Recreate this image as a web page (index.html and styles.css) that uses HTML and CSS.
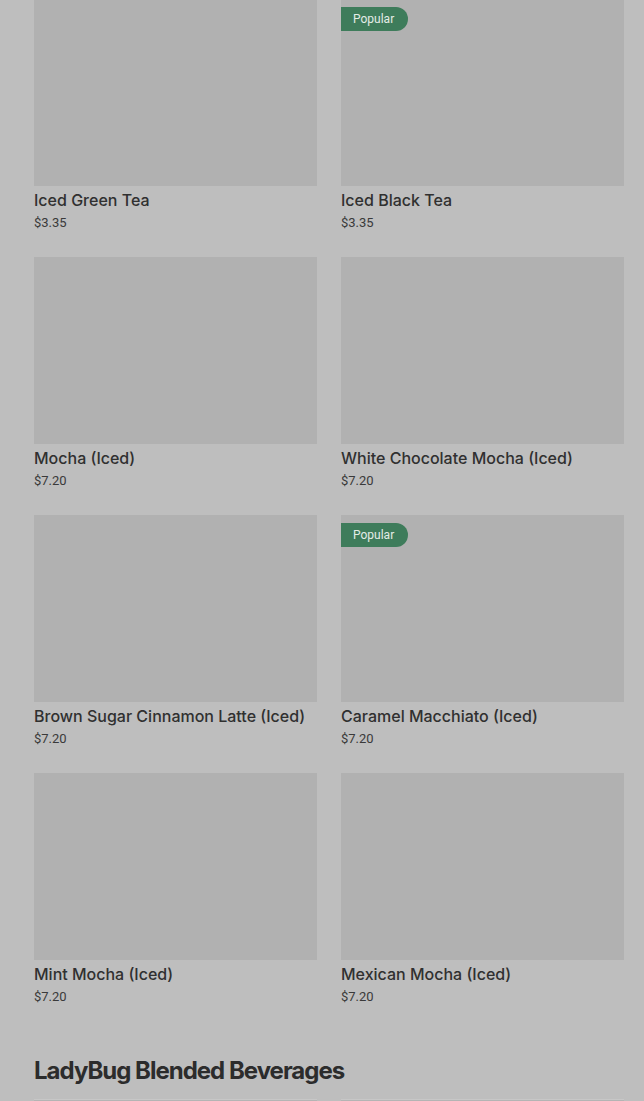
FILE: index.html
```html
<!DOCTYPE html>
<html lang="en">
<head>
    <meta charset="UTF-8">
    <meta name="viewport" content="width=device-width, initial-scale=1.0">
    <title>Menu</title>
    <link rel="stylesheet" href="styles.css">
</head>
<body>
    <div class="menu">
        <div class="grid first">
            <div class="item">
                <div class="photo"></div>
                <div class="name">Iced Green Tea</div>
                <div class="price">$3.35</div>
            </div>
            <div class="item">
                <div class="photo"><span class="badge">Popular</span></div>
                <div class="name">Iced Black Tea</div>
                <div class="price">$3.35</div>
            </div>
            <div class="item">
                <div class="photo"></div>
                <div class="name">Mocha (Iced)</div>
                <div class="price">$7.20</div>
            </div>
            <div class="item">
                <div class="photo"></div>
                <div class="name">White Chocolate Mocha (Iced)</div>
                <div class="price">$7.20</div>
            </div>
            <div class="item">
                <div class="photo"></div>
                <div class="name">Brown Sugar Cinnamon Latte (Iced)</div>
                <div class="price">$7.20</div>
            </div>
            <div class="item">
                <div class="photo"><span class="badge">Popular</span></div>
                <div class="name">Caramel Macchiato (Iced)</div>
                <div class="price">$7.20</div>
            </div>
            <div class="item">
                <div class="photo"></div>
                <div class="name">Mint Mocha (Iced)</div>
                <div class="price">$7.20</div>
            </div>
            <div class="item">
                <div class="photo"></div>
                <div class="name">Mexican Mocha (Iced)</div>
                <div class="price">$7.20</div>
            </div>
        </div>

        <h2 class="section-title">LadyBug Blended Beverages</h2>

        <div class="grid">
            <div class="item">
                <div class="photo light"></div>
            </div>
            <div class="item">
                <div class="photo light"></div>
            </div>
        </div>
    </div>
</body>
</html>
```

FILE: styles.css
```css
body {
    margin: 0;
    background-color: #bebebe;
    font-family: Roboto, "Liberation Sans", Arial, sans-serif;
    color: #2f2f2f;
    height: 1101px;
    overflow: hidden;
}
.menu {
    padding: 0 20px 0 34px;
}
.grid {
    display: grid;
    grid-template-columns: 283px 283px;
    column-gap: 24px;
    row-gap: 24px;
}
.grid.first {
    margin-top: -1px;
}
.item {
    display: flex;
    flex-direction: column;
}
.photo {
    position: relative;
    height: 187px;
    background-color: #b1b1b1;
}
.photo.light {
    background-color: #b4b4b4;
    border-top: 1px solid #c7c7c7;
}
.badge {
    position: absolute;
    top: 8px;
    left: 0;
    height: 24px;
    line-height: 24px;
    padding: 0 14px 0 12px;
    background-color: #3e7c5b;
    color: #e4ece7;
    font-size: 12px;
    border-radius: 0 12px 12px 0;
}
.name {
    margin-top: 4px;
    font-family: Inter, Roboto, sans-serif;
    font-size: 16px;
    font-weight: 500;
    line-height: 20px;
    color: #303030;
}
.price {
    margin-top: 3px;
    font-size: 13px;
    line-height: 20px;
    color: #3a3a3a;
}
.section-title {
    margin: 48px 0 12px;
    font-family: Inter, "Liberation Sans", sans-serif;
    font-size: 24px;
    font-weight: 700;
    line-height: 32px;
    letter-spacing: -1px;
    color: #2c2c2c;
}
```
